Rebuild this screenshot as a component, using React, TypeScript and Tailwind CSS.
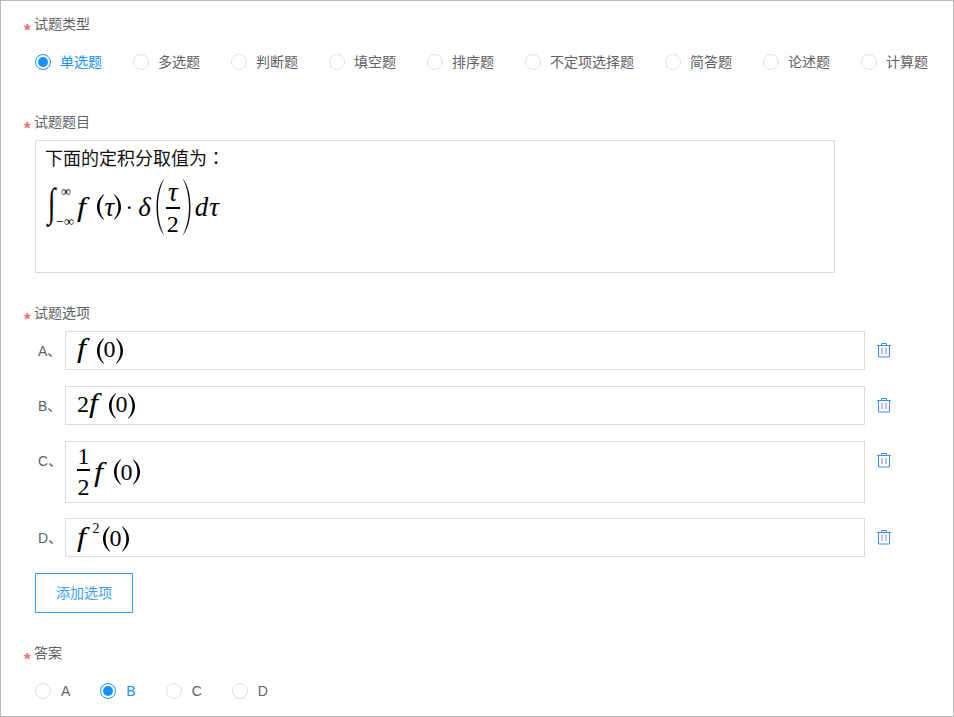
import { ReactNode } from "react";

const typeOptions = ["单选题", "多选题", "判断题", "填空题", "排序题", "不定项选择题", "简答题", "论述题", "计算题"];
const answerOptions = ["A", "B", "C", "D"];

const Radio = ({ label, checked, cjk }: { label: string; checked?: boolean; cjk?: boolean }) => (
  <label className="flex items-center gap-[10px]">
    {checked ? (
      <span className="flex h-4 w-4 items-center justify-center rounded-full border border-[#1890ff]">
        <span className="h-[10px] w-[10px] rounded-full bg-[#1890ff]" />
      </span>
    ) : (
      <span className="h-4 w-4 rounded-full border border-[#dcdfe6]" />
    )}
    <span className={`${checked ? "text-[#1890ff]" : "text-[#606266]"} ${cjk ? "-ml-px mr-px" : ""}`}>{label}</span>
  </label>
);

const FormLabel = ({ children }: { children: ReactNode }) => (
  <div className="relative -ml-px h-5 text-[14px] leading-5 text-[#606266]">
    <span className="absolute left-[-10px] top-[7px] text-[17px] font-bold leading-5 text-[#f56c6c]">*</span>
    {children}
  </div>
);

const TrashIcon = () => (
  <svg width="14" height="15" viewBox="0 0 14 15" fill="none" stroke="#3e8cff" strokeWidth="1" className="block">
    <path d="M0 2.500h14M4.500 2.500V.5h5v2M1.500 2.500v11.500h11V2.500" />
    <path d="M5 5v6M9 5v6" stroke="#a9a6ff" strokeWidth="1.500" />
  </svg>
);

// stretchy brackets for the formulas
const BigParen = ({ right }: { right?: boolean }) => (
  <svg width="9" height="60" viewBox="0 0 9 60" fill="#111" className={right ? "-scale-x-100" : ""}>
    <path d="M8.500 1C3 8 .5 18 .5 30s2.500 22 8 29C4.500 51 2 42 2 30S4.500 9 8.500 1z" />
  </svg>
);

const Paren = ({ right, className = "" }: { right?: boolean; className?: string }) => (
  <svg width="7" height="26" viewBox="0 0 7 26" fill="#000" className={`${right ? "-scale-x-100" : ""} ${className}`}>
    <path d="M6.800 .3C2.500 3.500 0 8 0 13s2.500 9.500 6.800 12.700l.2-.5C4 21.500 2.600 18 2.600 13S4 4.500 7 .8z" />
  </svg>
);

const I = ({ children, className = "" }: { children: ReactNode; className?: string }) => (
  <span className={`text-[27px] italic ${className}`}>{children}</span>
);

const Fraction = ({ top, bottom, width, topClass, bottomClass }: { top: ReactNode; bottom: ReactNode; width: string; topClass: string; bottomClass: string }) => (
  <span className={`inline-flex flex-col items-center ${width}`}>
    <span className={topClass}>{top}</span>
    <span className="h-[2px] w-full bg-black" />
    <span className={bottomClass}>{bottom}</span>
  </span>
);

const MathRow = ({ children, className = "" }: { children: ReactNode; className?: string }) => (
  <span className={`flex items-center whitespace-nowrap text-[24px] leading-none text-black [font-family:'Liberation_Serif',serif] ${className}`}>
    {children}
  </span>
);

const F = ({ className = "mr-[12px]" }: { className?: string }) => (
  <I className={`origin-left scale-x-[1.2] ${className}`}>f</I>
);

const Zero = ({ parenClass }: { parenClass: string }) => (
  <>
    <Paren className={parenClass} />
    <span>0</span>
    <Paren right className={parenClass} />
  </>
);

const OptionRow = ({ letter, children, tall }: { letter: string; children: ReactNode; tall?: boolean }) => (
  <div className={`flex items-start ${tall ? "mb-[15px]" : "mb-4"}`}>
    <span className="mt-[10px] w-[30px] pl-[3px] text-[14px] leading-5 text-[#606266]">{letter}、</span>
    <div className={`flex w-[800px] items-center border border-[#dcdcdc] pl-[11px] ${tall ? "h-[62px]" : "h-[39px]"}`}>
      {children}
    </div>
    <span className="ml-[12px] mt-[12px]">
      <TrashIcon />
    </span>
  </div>
);

export default function App() {
  return (
    <div className="h-[717px] w-[954px] overflow-hidden border border-[#bbbbbb] bg-white pl-[34px] pt-[13px] text-[14px] [font-family:'Liberation_Sans','Noto_Sans_CJK_SC',sans-serif]">
      <FormLabel>试题类型</FormLabel>
      <div className="mt-[18px] flex h-5 gap-[30px] leading-5">
        {typeOptions.map((t, i) => (
          <Radio key={t} label={t} checked={i === 0} cjk />
        ))}
      </div>

      <div className="mt-[40px]">
        <FormLabel>试题题目</FormLabel>
      </div>
      <div className="mt-[8px] h-[133px] w-[800px] border border-[#dcdcdc] pl-[10px]">
        <div className="-ml-px text-[18px] leading-[32px] text-[#111]">
          下面的定积分取值为<span className="[font-family:'Noto_Sans_CJK_TC',sans-serif]">：</span>
        </div>
        <MathRow className="mt-[2px] h-[60px]">
          <span className="relative mr-[23px] h-[60px] w-[8px]">
            <span className="absolute left-0 top-[6px] scale-x-[0.7] text-[40px] leading-[40px]">∫</span>
            <span className="absolute left-[15px] top-[8px] text-[14px] leading-none">∞</span>
            <span className="absolute left-[10px] top-[38px] text-[14px] leading-none">−∞</span>
          </span>
          <F />
          <Paren />
          <I className="ml-[1px]">τ</I>
          <Paren right />
          <span className="ml-[4px] mr-[5px]">·</span>
          <I className="mr-[5px]">δ</I>
          <BigParen />
          <span className="ml-[1px] mr-[2px]">
            <Fraction
              top={<I>τ</I>}
              bottom="2"
              width="w-[14px]"
              topClass="h-[29px] leading-[29px]"
              bottomClass="h-[27px] leading-[31px]"
            />
          </span>
          <BigParen right />
          <I className="ml-[4px] mr-[1px]">d</I>
          <I>τ</I>
        </MathRow>
      </div>

      <div className="mt-[30px]">
        <FormLabel>试题选项</FormLabel>
      </div>
      <div className="mt-[8px]">
        <OptionRow letter="A">
          <MathRow className="pb-[4px]">
            <F />
            <Zero parenClass="mt-[5px]" />
          </MathRow>
        </OptionRow>
        <OptionRow letter="B">
          <MathRow className="pb-[4px]">
            2
            <F />
            <Zero parenClass="mt-[5px]" />
          </MathRow>
        </OptionRow>
        <OptionRow letter="C" tall>
          <MathRow>
            <span className="mr-[4px]">
              <Fraction
                top="1"
                bottom="2"
                width="w-[13px]"
                topClass="h-[26px] leading-[26px]"
                bottomClass="h-[30px] leading-[32px]"
              />
            </span>
            <F />
            <Zero parenClass="" />
          </MathRow>
        </OptionRow>
        <OptionRow letter="D">
          <MathRow>
            <F className="" />
            <sup className="mb-[3px] ml-[8px] mr-[3px] text-[14px] leading-none">2</sup>
            <Zero parenClass="mt-[3px]" />
          </MathRow>
        </OptionRow>
      </div>

      <button type="button" className="h-10 w-[98px] border border-[#409eff] text-[14px] text-[#409eff]">
        添加选项
      </button>

      <div className="mt-[30px]">
        <FormLabel>答案</FormLabel>
      </div>
      <div className="mt-[18px] flex h-5 gap-[30px] leading-5">
        {answerOptions.map((a) => (
          <Radio key={a} label={a} checked={a === "B"} />
        ))}
      </div>
    </div>
  );
}
